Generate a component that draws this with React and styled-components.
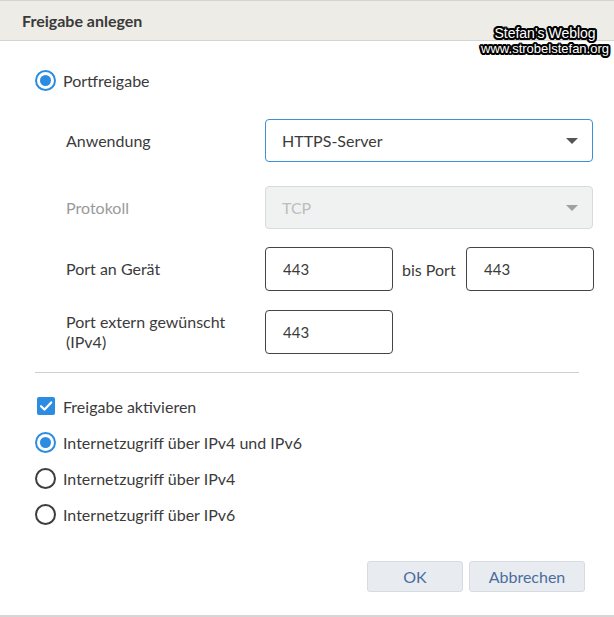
import React from 'react';
import styled, { createGlobalStyle } from 'styled-components';

const GlobalStyle = createGlobalStyle`
  html, body { margin: 0; padding: 0; background: #ffffff; }
  body { font-family: Lato, "Open Sans", sans-serif; color: #3b3b3b; }
  * { box-sizing: border-box; }
`;

export default function App() {
    return (
        <>
            <GlobalStyle />
            <Dialog>
                <Header>
                    <Title>Freigabe anlegen</Title>
                    <Watermark>
                        <WatermarkLine size={14}>Stefan's Weblog</WatermarkLine>
                        <WatermarkLine size={13}>www.strobelstefan.org</WatermarkLine>
                    </Watermark>
                </Header>

                <Body>
                    <OptionRow>
                        <Radio checked />
                        <OptionText>Portfreigabe</OptionText>
                    </OptionRow>

                    <FormGrid>
                        <FieldRow space={28}>
                            <Label>Anwendung</Label>
                            <Select focused>
                                <span>HTTPS-Server</span>
                                <Caret />
                            </Select>
                        </FieldRow>
                        <FieldRow space={24}>
                            <Label disabled>Protokoll</Label>
                            <Select disabled>
                                <span>TCP</span>
                                <Caret disabled />
                            </Select>
                        </FieldRow>
                        <FieldRow space={18}>
                            <Label>Port an Gerät</Label>
                            <Inline>
                                <Input>443</Input>
                                <BisLabel>bis Port</BisLabel>
                                <Input>443</Input>
                            </Inline>
                        </FieldRow>
                        <FieldRow space={19}>
                            <Label>Port extern gewünscht<br />(IPv4)</Label>
                            <Input>443</Input>
                        </FieldRow>
                    </FormGrid>

                    <Divider />

                    <OptionList>
                        <OptionRow>
                            <Checkbox>
                                <svg width="14" height="12" viewBox="0 0 14 12">
                                    <path d="M2 6.2 L5.6 9.6 L12.2 2.4" fill="none" stroke="#fff" strokeWidth="2.2" strokeLinecap="round" strokeLinejoin="round" />
                                </svg>
                            </Checkbox>
                            <OptionText>Freigabe aktivieren</OptionText>
                        </OptionRow>
                        <OptionRow>
                            <Radio checked />
                            <OptionText>Internetzugriff über IPv4 und IPv6</OptionText>
                        </OptionRow>
                        <OptionRow>
                            <Radio />
                            <OptionText>Internetzugriff über IPv4</OptionText>
                        </OptionRow>
                        <OptionRow>
                            <Radio />
                            <OptionText>Internetzugriff über IPv6</OptionText>
                        </OptionRow>
                    </OptionList>

                    <Buttons>
                        <Button width={96}>OK</Button>
                        <Button width={116}>Abbrechen</Button>
                    </Buttons>
                </Body>
            </Dialog>
        </>
    );
}

const Dialog = styled.div`
    width: 614px;
    height: 617px;
    display: flex;
    flex-direction: column;
    border-bottom: 2px solid #d6d6d6;
`;

const Header = styled.div`
    position: relative;
    height: 41px;
    background: #edece6;
    border-top: 1px solid #d4d4d0;
    border-bottom: 1px solid #d4d4d0;
    display: flex;
    align-items: center;
    padding-left: 22px;
`;

const Title = styled.div`
    font-size: 16px;
    font-weight: 700;
    color: #3a3a3a;
`;

const Watermark = styled.div`
    position: absolute;
    right: 5px;
    top: 25px;
    display: flex;
    flex-direction: column;
    align-items: center;
    font-family: "Liberation Sans", Arial, sans-serif;
    font-weight: 400;
    line-height: 15px;
    color: #ffffff;
    z-index: 2;
    text-shadow:
        2px 0 0 #000, -2px 0 0 #000, 0 2px 0 #000, 0 -2px 0 #000,
        1px 1px 0 #000, -1px 1px 0 #000, 1px -1px 0 #000, -1px -1px 0 #000,
        2px 1px 0 #000, -2px 1px 0 #000, 2px -1px 0 #000, -2px -1px 0 #000,
        1px 2px 0 #000, -1px 2px 0 #000, 1px -2px 0 #000, -1px -2px 0 #000;
`;

const WatermarkLine = styled.span`
    font-size: ${({ size }) => size}px;
`;

const Body = styled.div`
    flex: 1;
    display: flex;
    flex-direction: column;
    padding: 28px 29px 0 35px;
`;

const OptionRow = styled.div`
    display: flex;
    align-items: center;
    gap: 7px;
    height: 22px;
`;

const OptionText = styled.span`
    font-size: 16px;
    color: #3b3b3b;
`;

const Radio = styled.span`
    width: 21px;
    height: 21px;
    border-radius: 50%;
    border: 2px solid ${({ checked }) => (checked ? '#2b8ce2' : '#3d3d3d')};
    display: flex;
    align-items: center;
    justify-content: center;
    flex-shrink: 0;

    &::after {
        content: '';
        width: 11px;
        height: 11px;
        border-radius: 50%;
        background: ${({ checked }) => (checked ? '#2b8ce2' : 'transparent')};
    }
`;

const Checkbox = styled.span`
    width: 18px;
    height: 18px;
    margin: 0 1px 0 2px;
    border-radius: 2px;
    background: #2b8ce2;
    display: flex;
    align-items: center;
    justify-content: center;
    flex-shrink: 0;
`;

const FormGrid = styled.div`
    display: flex;
    flex-direction: column;
    padding-left: 31px;
`;

const FieldRow = styled.div`
    display: grid;
    grid-template-columns: 199px auto;
    align-items: center;
    margin-top: ${({ space }) => space}px;
`;

const Label = styled.div`
    font-size: 16px;
    line-height: 20px;
    color: ${({ disabled }) => (disabled ? '#9a9a9a' : '#3b3b3b')};
`;

const Select = styled.div`
    width: 328px;
    height: 43px;
    display: flex;
    align-items: center;
    justify-content: space-between;
    padding: 0 14px 0 16px;
    border-radius: 4px;
    font-size: 16px;
    border: 1px solid ${({ focused, disabled }) => (focused ? '#3c8fdc' : disabled ? '#d9dada' : '#444')};
    background: ${({ disabled }) => (disabled ? '#f0f1f1' : '#ffffff')};
    color: ${({ disabled }) => (disabled ? '#bdbdbd' : '#3b3b3b')};
`;

const Caret = styled.span`
    width: 0;
    height: 0;
    border-left: 6px solid transparent;
    border-right: 6px solid transparent;
    border-top: 6px solid ${({ disabled }) => (disabled ? '#a0a0a0' : '#555555')};
`;

const Inline = styled.div`
    display: flex;
    align-items: center;
`;

const Input = styled.div`
    width: 128px;
    height: 44px;
    display: flex;
    align-items: center;
    padding-left: 17px;
    border: 1px solid #444444;
    border-radius: 4px;
    font-size: 15px;
    color: #3b3b3b;
`;

const BisLabel = styled.span`
    font-size: 16px;
    color: #3b3b3b;
    width: 73px;
    padding-left: 9px;
`;

const Divider = styled.div`
    height: 1px;
    background: #cfcfcf;
    margin: 18px 6px 22px 0;
`;

const OptionList = styled.div`
    display: flex;
    flex-direction: column;
    gap: 14px;
`;

const Buttons = styled.div`
    display: flex;
    justify-content: flex-end;
    gap: 6px;
    margin-top: 36px;
`;

const Button = styled.button`
    width: ${({ width }) => width}px;
    height: 31px;
    background: #e8ecf0;
    border: 1px solid #d6dce2;
    border-radius: 3px;
    font-family: Lato, "Open Sans", sans-serif;
    font-size: 16px;
    color: #4b6c9e;
    padding: 0;
`;
